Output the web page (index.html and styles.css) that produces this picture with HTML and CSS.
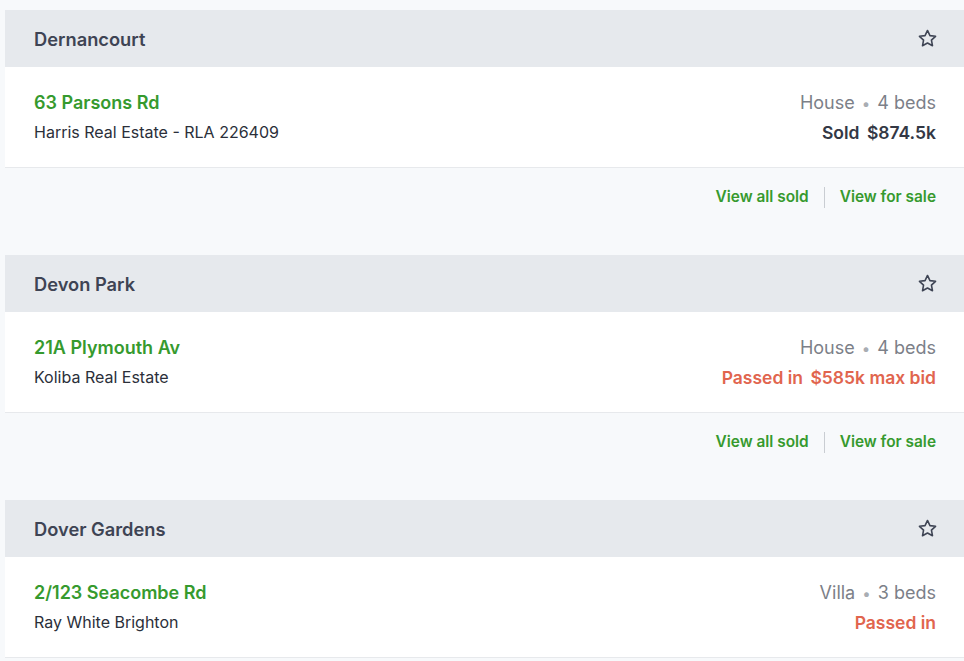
FILE: index.html
```html
<!DOCTYPE html>
<html lang="en">
<head>
    <meta charset="UTF-8">
    <meta name="viewport" content="width=device-width, initial-scale=1.0">
    <title>Recent sales</title>
    <link rel="stylesheet" href="styles.css">
</head>
<body>
    <div class="results">
        <section class="suburb">
            <header class="suburb-head">
                <h2>Dernancourt</h2>
                <button class="fav" type="button" aria-label="Save suburb">
                    <svg viewBox="0 0 24 24" width="21" height="21"><path d="M12 2.8l2.8 5.9 6.4.8-4.7 4.4 1.2 6.4L12 17.2l-5.7 3.1 1.2-6.4-4.7-4.4 6.4-.8z"/></svg>
                </button>
            </header>
            <div class="listing">
                <div class="listing-main">
                    <a class="address" href="#">63 Parsons Rd</a>
                    <div class="agency">Harris Real Estate - RLA 226409</div>
                </div>
                <div class="listing-meta">
                    <div class="kind">House <span class="dot">•</span> 4 beds</div>
                    <div class="result">Sold <span>$874.5k</span></div>
                </div>
            </div>
            <div class="suburb-links">
                <a href="#">View all sold</a>
                <span class="sep"></span>
                <a href="#">View for sale</a>
            </div>
        </section>

        <section class="suburb">
            <header class="suburb-head">
                <h2>Devon Park</h2>
                <button class="fav" type="button" aria-label="Save suburb">
                    <svg viewBox="0 0 24 24" width="21" height="21"><path d="M12 2.8l2.8 5.9 6.4.8-4.7 4.4 1.2 6.4L12 17.2l-5.7 3.1 1.2-6.4-4.7-4.4 6.4-.8z"/></svg>
                </button>
            </header>
            <div class="listing">
                <div class="listing-main">
                    <a class="address" href="#">21A Plymouth Av</a>
                    <div class="agency">Koliba Real Estate</div>
                </div>
                <div class="listing-meta">
                    <div class="kind">House <span class="dot">•</span> 4 beds</div>
                    <div class="result passed">Passed in <span>$585k max bid</span></div>
                </div>
            </div>
            <div class="suburb-links">
                <a href="#">View all sold</a>
                <span class="sep"></span>
                <a href="#">View for sale</a>
            </div>
        </section>

        <section class="suburb">
            <header class="suburb-head">
                <h2>Dover Gardens</h2>
                <button class="fav" type="button" aria-label="Save suburb">
                    <svg viewBox="0 0 24 24" width="21" height="21"><path d="M12 2.8l2.8 5.9 6.4.8-4.7 4.4 1.2 6.4L12 17.2l-5.7 3.1 1.2-6.4-4.7-4.4 6.4-.8z"/></svg>
                </button>
            </header>
            <div class="listing">
                <div class="listing-main">
                    <a class="address" href="#">2/123 Seacombe Rd</a>
                    <div class="agency">Ray White Brighton</div>
                </div>
                <div class="listing-meta">
                    <div class="kind">Villa <span class="dot">•</span> 3 beds</div>
                    <div class="result passed">Passed in</div>
                </div>
            </div>
        </section>
    </div>
</body>
</html>
```

FILE: styles.css
```css
body {
    margin: 0;
    font-family: 'Inter', 'Liberation Sans', sans-serif;
    background: #f7f9fb;
    color: #2b2f3a;
    overflow: hidden;
}

.results {
    padding: 10px 0 0 5px;
}

.suburb-head {
    height: 57px;
    background: #e6e9ed;
    display: flex;
    align-items: center;
    justify-content: space-between;
    padding: 0 26px 0 29px;
}

.suburb-head h2 {
    margin: 0;
    font-size: 18.3px;
    font-weight: 600;
    color: #3e4454;
}

.fav {
    border: none;
    background: none;
    padding: 0;
    display: flex;
    cursor: pointer;
}

.fav svg {
    fill: none;
    stroke: #3e4454;
    stroke-width: 1.8;
    stroke-linejoin: round;
}

.listing {
    height: 101px;
    background: #fff;
    border-bottom: 1px solid #e7e9ec;
    display: flex;
    justify-content: space-between;
    align-items: flex-start;
    padding: 0 28px 0 29px;
    box-sizing: border-box;
}

.listing-main,
.listing-meta {
    padding-top: 25px;
}

.listing-meta {
    text-align: right;
}

.address {
    display: block;
    font-size: 18px;
    font-weight: 600;
    color: #369a2e;
    text-decoration: none;
    line-height: 22px;
}

.agency {
    font-size: 16px;
    line-height: 20px;
    margin-top: 8px;
    color: #2b2f3a;
}

.kind {
    font-size: 18px;
    line-height: 22px;
    color: #7c8088;
}

.dot {
    color: #a9adb3;
    font-size: 15px;
    margin: 0 2px;
}

.result {
    font-size: 17.5px;
    line-height: 22px;
    margin-top: 7px;
    font-weight: 600;
    color: #333845;
}

.result span {
    margin-left: 3px;
}

.result.passed {
    color: #e1654e;
}

.suburb-links {
    height: 87px;
    display: flex;
    justify-content: flex-end;
    align-items: flex-start;
    padding: 19px 28px 0 0;
    box-sizing: border-box;
}

.suburb-links a {
    font-size: 15.4px;
    font-weight: 600;
    color: #369a2e;
    text-decoration: none;
    line-height: 20px;
}

.sep {
    width: 1px;
    height: 21px;
    background: #c9cdd2;
    margin: 0 15px;
}
```
